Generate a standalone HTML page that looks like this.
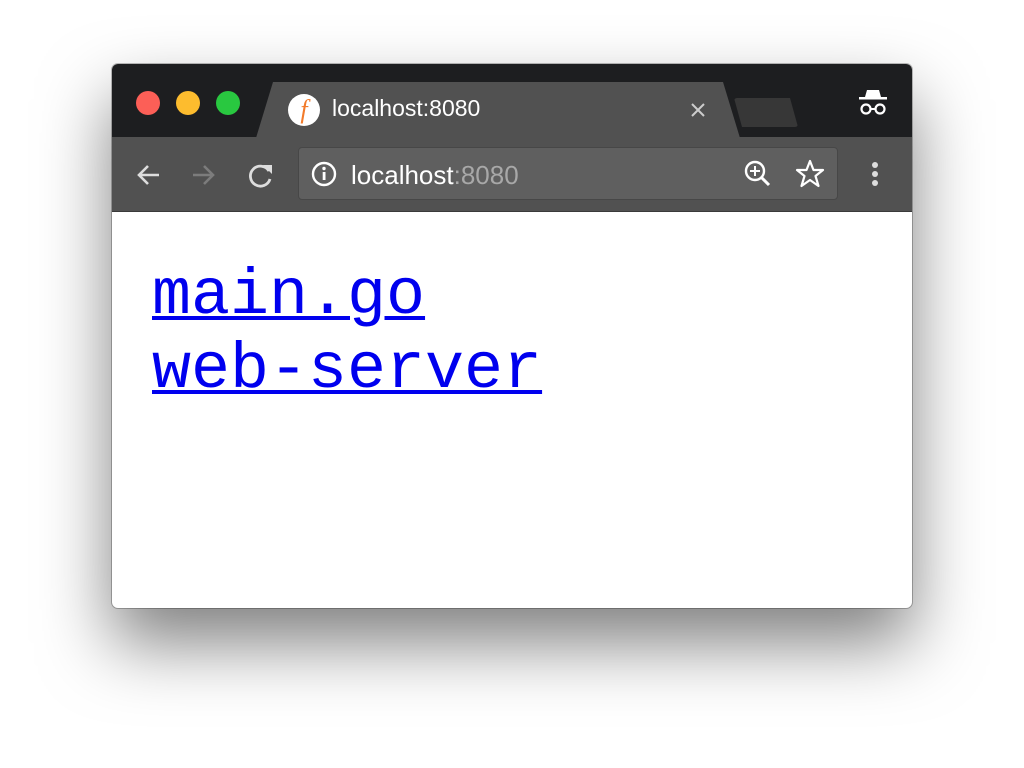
<!DOCTYPE html>
<html><head><style>
html,body{margin:0;padding:0;width:1024px;height:768px;background:#fff;overflow:hidden;font-family:"Liberation Sans",sans-serif}
.win{position:absolute;left:112px;top:64px;width:800px;height:544px;border-radius:6px;overflow:hidden;background:#fff;box-shadow:0 35px 70px rgba(0,0,0,.5),0 0 0 1px rgba(0,0,0,.25)}
.title{position:absolute;left:0;top:0;width:800px;height:74px;background:#1d1e20}
.dot{position:absolute;top:27px;width:24px;height:24px;border-radius:50%}
.tab{position:absolute;left:144px;top:18px;width:484px;height:56px;background:#515151;clip-path:polygon(17px 0,467px 0,484px 56px,0 56px)}
.tab2{position:absolute;left:622px;top:34px;width:64px;height:29px;background:#373737;clip-path:polygon(0 0,56px 0,64px 29px,8px 29px);border-radius:3px}
.tool{position:absolute;left:0;top:73px;width:800px;height:74px;background:#515151;border-bottom:1px solid #3a3a3a}
.addr{position:absolute;left:186px;top:10px;width:538px;height:51px;background:#5f5f5f;border:1px solid #474747;border-radius:4px}
.links{position:absolute;left:40px;top:195px;font-family:"Liberation Mono",monospace;font-size:65px;line-height:74px}
.links a{color:#0000ee;text-decoration:underline;text-decoration-thickness:4px;text-underline-offset:3px;display:block;width:max-content}
</style></head><body>
<div class="win">
 <div class="title">
  <div class="dot" style="left:24px;background:#fc5f57"></div>
  <div class="dot" style="left:64px;background:#fdbc2e"></div>
  <div class="dot" style="left:104px;background:#29c840"></div>
  <div class="tab"></div>
  <div class="tab2"></div>
  <div style="position:absolute;left:176px;top:30px;width:32px;height:32px;border-radius:50%;background:#fff;color:#f27a2a;font-family:'Liberation Serif',serif;font-style:italic;font-size:26px;text-align:center;line-height:32px">f</div>
  <div style="position:absolute;left:220px;top:31px;color:#fff;font-size:23px">localhost:8080</div>
  <svg style="position:absolute;left:578px;top:38px" width="16" height="16"><path d="M2 2L14 14M14 2L2 14" stroke="#ccc" stroke-width="2"/></svg>
  <svg style="position:absolute;left:746px;top:24px" width="30" height="30"><path d="M9 2h12l2 7H7z" fill="#fff"/><rect x="1" y="9" width="28" height="2.5" fill="#fff"/><circle cx="8" cy="21" r="4.5" fill="none" stroke="#fff" stroke-width="2.2"/><circle cx="22" cy="21" r="4.5" fill="none" stroke="#fff" stroke-width="2.2"/><path d="M12.5 21h5" stroke="#fff" stroke-width="2"/></svg>
 </div>
 <div class="tool">
  <svg style="position:absolute;left:22px;top:24px" width="28" height="28"><path d="M25 14H5M14 5L5 14L14 23" stroke="#ddd" stroke-width="2.6" fill="none"/></svg>
  <svg style="position:absolute;left:78px;top:24px" width="28" height="28"><path d="M3 14H23M14 5L23 14L14 23" stroke="#7c7c7c" stroke-width="2.6" fill="none"/></svg>
  <svg style="position:absolute;left:134px;top:24px" width="30" height="30"><path d="M23 10A10 10 0 1 0 24 18" stroke="#ddd" stroke-width="2.8" fill="none"/><path d="M17 4H26V13Z" fill="#ddd"/></svg>
  <div class="addr">
   <svg style="position:absolute;left:12px;top:13px" width="26" height="26"><circle cx="13" cy="13" r="11" fill="none" stroke="#fff" stroke-width="2.4"/><rect x="11.7" y="11" width="2.8" height="8" fill="#fff"/><circle cx="13" cy="7.5" r="1.7" fill="#fff"/></svg>
   <div style="position:absolute;left:52px;top:12px;font-size:26px;color:#fff">localhost<span style="color:#a8a8a8">:8080</span></div>
   <svg style="position:absolute;left:444px;top:11px" width="30" height="30"><circle cx="12" cy="12" r="9" fill="none" stroke="#fff" stroke-width="2.4"/><path d="M12 7v10M7 12h10" stroke="#fff" stroke-width="2"/><path d="M18.5 18.5L26 26" stroke="#fff" stroke-width="3"/></svg>
   <svg style="position:absolute;left:496px;top:11px" width="30" height="30"><path d="M15 2L18.5 11H28L20.5 17L23.5 27L15 21L6.5 27L9.5 17L2 11H11.5Z" fill="none" stroke="#fff" stroke-width="2.2" stroke-linejoin="round"/></svg>
  </div>
  <div style="position:absolute;left:760px;top:25px;width:6px;height:6px;border-radius:50%;background:#ddd;box-shadow:0 9px 0 #ddd,0 18px 0 #ddd"></div>
 </div>
 <div class="links"><a>main.go</a><a>web-server</a></div>
</div>
</body></html>
